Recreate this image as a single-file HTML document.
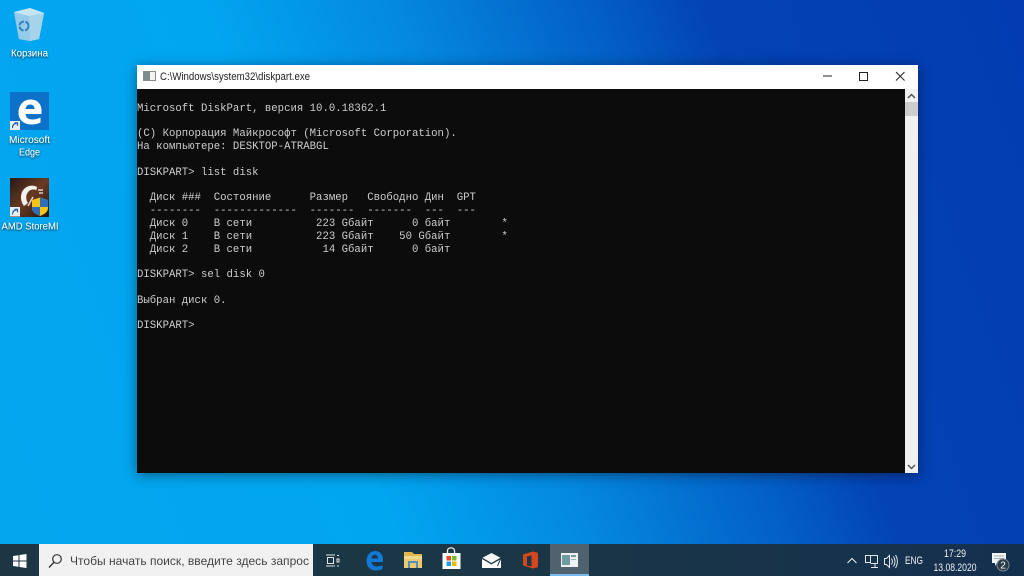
<!DOCTYPE html>
<html><head><meta charset="utf-8"><style>
html,body{margin:0;padding:0;width:1024px;height:576px;overflow:hidden}
body{position:relative;background:linear-gradient(70deg,#04a6ee 0%,#01a6f1 33%,#0488e0 49%,#035cc4 66%,#0343b4 74%,#033cb2 100%);font-family:"Liberation Sans",sans-serif}
.win{position:absolute;left:137px;top:65px;width:781px;height:408px;background:#fff;box-shadow:0 2px 12px rgba(0,0,0,.45)}
.con{position:absolute;left:0;top:24px;width:768px;height:384px;background:#0c0c0c;overflow:hidden}
pre{margin:0;padding-top:1px;font:10.667px/12.8px "Liberation Mono","DejaVu Sans Mono",monospace;color:#cdcdcd;filter:blur(.25px)}
.sb{position:absolute;left:768px;top:24px;width:13px;height:384px;background:#f0f0f0}
.th{position:absolute;left:0;top:13px;width:13px;height:14px;background:#cdcdcd}
.tb{position:absolute;left:0;top:544px;width:1024px;height:32px;background:linear-gradient(90deg,#1c3743,#1b3645 50%,#14304f)}
.s{position:absolute;left:39px;top:0;width:274px;height:32px;background:#f1f1f1}
.a{position:absolute;left:550px;top:0;width:39px;height:32px;background:#50626d}
.a i{position:absolute;left:0;bottom:0;width:39px;height:2px;background:#76b9ed}
svg{position:absolute;left:0;top:0;filter:blur(.3px)}
</style></head><body>
<div class="win"><div class="con"><pre>

Microsoft DiskPart, версия 10.0.18362.1

(C) Корпорация Майкрософт (Microsoft Corporation).
На компьютере: DESKTOP-ATRABGL

DISKPART&gt; list disk

  Диск ###  Состояние      Размер   Свободно Дин  GPT
  --------  -------------  -------  -------  ---  ---
  Диск 0    В сети          223 Gбайт      0 байт        *
  Диск 1    В сети          223 Gбайт    50 Gбайт        *
  Диск 2    В сети           14 Gбайт      0 байт

DISKPART&gt; sel disk 0

Выбран диск 0.

DISKPART&gt;</pre></div>
<div class="sb"><div class="th"></div></div></div>
<div class="tb"><div class="s"></div><div class="a"><i></i></div></div>
<svg width="1024" height="576" viewBox="0 0 1024 576">
<defs><filter id="sh" x="-20%" y="-40%" width="140%" height="180%"><feDropShadow dx="0" dy="1" stdDeviation="1" flood-color="#000" flood-opacity=".8"/></filter>
<linearGradient id="amd" x1="0" y1="0" x2="1" y2="1"><stop offset="0" stop-color="#2a1a14"/><stop offset=".5" stop-color="#6a3a22"/><stop offset="1" stop-color="#20140f"/></linearGradient></defs>

<!-- window controls -->
<path d="M823 76h9" stroke="#222" stroke-width="1"/>
<rect x="859.500" y="72.500" width="8" height="8" fill="none" stroke="#222"/>
<path d="M896 72l8.500 8.500M904.500 72L896 80.500" stroke="#222" fill="none"/>
<path d="M908 98l3.500-3.500 3.500 3.500" stroke="#555" stroke-width="1.500" fill="none"/>
<path d="M908 465l3.500 3.500 3.500-3.500" stroke="#555" stroke-width="1.500" fill="none"/>
<!-- title icon -->
<rect x="143.500" y="71.500" width="12" height="9" fill="#f4f4f4" stroke="#8a8a8a"/>
<rect x="144" y="72" width="6" height="8" fill="#7d8d8d"/>
<text x="160" y="80" font-size="11" fill="#222" textLength="150" lengthAdjust="spacingAndGlyphs">C:\Windows\system32\diskpart.exe</text>

<!-- recycle bin -->
<path d="M14 12L30 8l14 5-5 26-9 2-11-2z" fill="#a8d6ee"/>
<path d="M14 12l15 4 15-3-5 26-9 2-11-2z" fill="#93cbe8"/>
<path d="M29 16l15-3-5 26-9 2z" fill="#a6d3ea"/>
<path d="M14 12L30 8l14 5-15 3z" fill="#c6e5f4"/>
<circle cx="24" cy="26" r="4.500" fill="none" stroke="#2f7fc0" stroke-width="2" stroke-dasharray="6 1.500"/>
<!-- edge -->
<rect x="10" y="92" width="39" height="38" fill="#0c72c9"/>
<path d="M18.500 113c0-8 5-13.500 12-13.500 7 0 11 4.500 11 11v3.500H25.500c.5 4 3 5.500 7 5.500 2.500 0 5.500-.8 8-2v5c-2.500 1.300-6 2-9 2-8.500 0-13-5.500-13-11.500zM25.500 109h9c0-3-1.800-4.500-4.400-4.500s-4.100 1.700-4.600 4.500z" fill="#fff"/>
<rect x="10" y="121" width="10" height="9" fill="#e8eef4"/>
<path d="M12.500 128c0-3 1.500-4.500 4-4.500M14.500 122.800h3v3" stroke="#1f5fa8" stroke-width="1.200" fill="none"/>
<!-- AMD -->
<rect x="10" y="178" width="39" height="39" fill="url(#amd)"/>
<path d="M37 187c-5-3-12-1-15 5-2 5-1 10 2 14l4-3c-2-3-2.500-7-.500-10 2-3.500 5.500-4 9-3z" fill="#f4f0ec"/>
<path d="M28 206l5-9" stroke="#e8d8c8" stroke-width="1.500"/>
<path d="M38 190h5M39 193h4" stroke="#eee" stroke-width="1.200"/>
<path d="M32 200l8-2.500 8 2.500v8c0 4-4 6.500-8 8-4-1.500-8-4-8-8z" fill="#f3c318"/>
<path d="M40 197.500l8 2.500v7h-8zM32 207h8v9c-4-1.500-8-4-8-8z" fill="#2f6fb8"/>
<rect x="10" y="207" width="10" height="9.500" fill="#e8eef4"/>
<path d="M12.500 214.500c0-3 1.500-4.500 4-4.500M14.500 209.300h3v3" stroke="#1f5fa8" stroke-width="1.200" fill="none"/>
<!-- desktop labels -->
<g font-size="10" fill="#fff" text-anchor="middle" filter="url(#sh)">
<text x="29.500" y="56.500" textLength="37" lengthAdjust="spacingAndGlyphs">Корзина</text>
<text x="29.500" y="143" textLength="41" lengthAdjust="spacingAndGlyphs">Microsoft</text>
<text x="29.500" y="155.500" textLength="21" lengthAdjust="spacingAndGlyphs">Edge</text>
<text x="30" y="229.500" textLength="57" lengthAdjust="spacingAndGlyphs">AMD StoreMI</text>
</g>

<!-- start -->
<path d="M13 556l5.500-.8v5.300H13zM19.500 555l7-1v6.500h-7zM13 561.500h5.500v5.300L13 566zM19.500 561.500h7v6.500l-7-1z" fill="#fff"/>
<!-- search -->
<circle cx="57" cy="559" r="4.300" fill="none" stroke="#333" stroke-width="1.200"/>
<path d="M53.800 562.500L49 567.500" stroke="#333" stroke-width="1.300"/>
<text x="70" y="565" font-size="12" fill="#444" textLength="239" lengthAdjust="spacingAndGlyphs">Чтобы начать поиск, введите здесь запрос</text>
<!-- task view -->
<path d="M326 555h9M326 566h9M327.500 557.500h6v6h-6zM337 555.500h2M337 559h2v3h-2zM337 566h2" stroke="#dfe5e8" fill="none"/>
<!-- edge -->
<path d="M366.500 561c0-5.500 3.500-10 8.500-10 5.500 0 8 4 8 8.500v2.500h-11.500c.3 3 2.500 4.500 5.500 4.500 2 0 4-.6 5.500-1.500v4c-2 1-4 1.500-6.500 1.500-6.500 0-9.500-4.500-9.500-9.500zM371.500 558.500h6.500c0-2.300-1.300-3.800-3.200-3.800-1.800 0-3 1.500-3.300 3.800z" fill="#1279d6"/>
<!-- folder -->
<path d="M404 552h8l2 2h8v14h-18z" fill="#e0b54a"/>
<path d="M404 556h18v12h-18z" fill="#eec96c"/>
<path d="M409 568v-6h8v6" fill="none" stroke="#4f8fc4" stroke-width="2"/>
<path d="M404 556h18v3h-18z" fill="#f0d98f"/>
<!-- store -->
<path d="M447.500 553v-2.500c0-3.500 7-3.500 7 0v2.500" fill="none" stroke="#f2f2f2" stroke-width="1.300"/>
<rect x="442.500" y="553" width="18" height="16" fill="#fdfdfd"/>
<rect x="446.500" y="556" width="4.500" height="4.500" fill="#e8492a"/>
<rect x="452" y="556" width="4.500" height="4.500" fill="#7cba2c"/>
<rect x="446.500" y="561.500" width="4.500" height="4.500" fill="#1f9ce6"/>
<rect x="452" y="561.500" width="4.500" height="4.500" fill="#f7b500"/>
<!-- mail -->
<path d="M482 558l9.500-5 9.500 5-9.500 5.500z" fill="#f4f6f7"/>
<path d="M482 559v9h19v-9l-9.500 5.500z" fill="#fff"/>
<path d="M482 558l9.500 5.500 9.500-5.500-3.500 8" stroke="#1c3743" stroke-width="1" fill="none"/>
<!-- office -->
<path d="M523 554.500l10-3 5 1.300v14.400l-5 1.300-10-3z" fill="#d2471c"/>
<path d="M527 556.500l4.500-1v11l-4.500-1z" fill="#1b3645"/>
<!-- active app -->
<rect x="561" y="553" width="17" height="14" fill="#eef2f2"/>
<rect x="562" y="555" width="8" height="10" fill="#6f9aa0"/>
<rect x="571" y="555" width="5" height="2" fill="#7d9aa3"/>
<rect x="571" y="559" width="5" height="1" fill="#9fb0b6"/>
<!-- tray -->
<path d="M847.500 563l4.500-4.500 4.500 4.500" stroke="#e8eef0" stroke-width="1.100" fill="none"/>
<path d="M865.500 555.500h5v7h-5zM868 555.500h9.500v8h-7M875 564v3M871 567.500h7" stroke="#e0e6e8" fill="none"/>
<path d="M884.500 558.500h2l3-3v12l-3-3h-2zM891.500 558.500c1.200 2 1.200 4 0 6M893.500 556.500c2 3 2 7 0 10M895.500 555c2.500 4 2.500 9 0 13" stroke="#e0e6e8" fill="none"/>
<text x="914" y="564" font-size="11" fill="#eef2f4" text-anchor="middle" textLength="18" lengthAdjust="spacingAndGlyphs">ENG</text>
<text x="955" y="557" font-size="11" fill="#eef2f4" text-anchor="middle" textLength="22" lengthAdjust="spacingAndGlyphs">17:29</text>
<text x="955" y="571" font-size="11" fill="#eef2f4" text-anchor="middle" textLength="43" lengthAdjust="spacingAndGlyphs">13.08.2020</text>
<path d="M992 553h14v10h-9l-2 3v-3h-3z" fill="#f1f4f5"/>
<path d="M994 556h10M994 558.500h10" stroke="#8a98a0" stroke-width=".8"/>
<circle cx="1003" cy="565" r="6" fill="#2a3c48" stroke="#7c8a92"/>
<text x="1003" y="568.500" font-size="10" fill="#fff" text-anchor="middle">2</text>
</svg>
</body></html>
